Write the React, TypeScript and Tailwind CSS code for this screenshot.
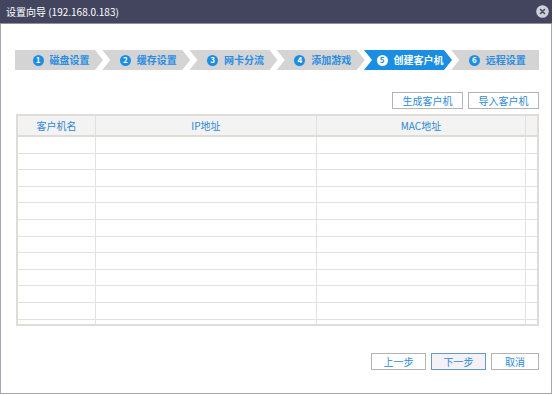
import React from "react";

const FONT = { fontFamily: '"Noto Sans CJK SC", "Noto Sans", sans-serif' };

const STEPS = ["磁盘设置", "缓存设置", "网卡分流", "添加游戏", "创建客户机", "远程设置"];
const ACTIVE = 4;

function Step({ index, label }: { index: number; label: string }) {
  const active = index === ACTIVE;
  const shape =
    index === 0
      ? "[clip-path:polygon(0_0,calc(100%_-_8px)_0,100%_50%,calc(100%_-_8px)_100%,0_100%)]"
      : index === STEPS.length - 1
        ? "[clip-path:polygon(0_0,100%_0,100%_100%,0_100%,8px_50%)]"
        : "[clip-path:polygon(0_0,calc(100%_-_8px)_0,100%_50%,calc(100%_-_8px)_100%,0_100%,8px_50%)]";
  return (
    <div
      className={[
        "flex h-[20px] w-[88px] shrink-0 items-center justify-center gap-[6px] pl-1",
        index > 0 ? "-ml-[0.75px]" : "",
        active ? "bg-[#1b8ee4]" : "bg-[#d4d4d4]",
        shape,
      ].join(" ")}
    >
      <span
        className={[
          "flex h-[11px] w-[11px] items-center justify-center rounded-full text-[8px] font-bold leading-none",
          active ? "bg-white text-[#1b8ee4]" : "bg-[#1b8ee4] text-white",
        ].join(" ")}
      >
        {index + 1}
      </span>
      <span
        className={[
          "text-[10px] font-bold leading-none",
          active ? "text-white" : "text-[#2a8de2]",
        ].join(" ")}
      >
        {label}
      </span>
    </div>
  );
}

function Btn({
  children,
  width,
  primary,
}: {
  children: React.ReactNode;
  width: string;
  primary?: boolean;
}) {
  return (
    <button
      className={[
        "flex h-[17px] items-center justify-center text-[10px] leading-none text-[#2d8ad6]",
        width,
        primary
          ? "border border-[#6b98c4] bg-[#f4f2f7]"
          : "border border-[#b4b4b4] bg-white",
      ].join(" ")}
    >
      {children}
    </button>
  );
}

const ROWS = Array.from({ length: 12 }, (_, i) => i);

export default function App() {
  return (
    <div className="h-[395px] w-[554px] overflow-hidden bg-white" style={FONT}>
      <div className="flex h-[394px] w-[552px] flex-col border-x border-b border-[#a6a6b6]">
        {/* title bar */}
        <div className="-mx-px flex h-[24px] shrink-0 items-center justify-between border-b border-[#8e8fa2] bg-[#43455f] pl-[6px] pr-[3px]">
          <span className="text-[10px] text-white">设置向导 (192.168.0.183)</span>
          <svg width="13" height="13" viewBox="0 0 13 13" className="-mt-px">
            <circle cx="6.5" cy="6.5" r="6.3" fill="#cfd0da" />
            <path d="M4.5 4.5 L8.5 8.5 M8.5 4.5 L4.5 8.5" stroke="#4a4b60" strokeWidth="1.6" strokeLinecap="round" />
          </svg>
        </div>

        <div className="flex flex-1 flex-col pl-[14px] pr-[12px]">
          {/* steps */}
          <div className="mt-[26px] flex">
            {STEPS.map((s, i) => (
              <Step key={s} index={i} label={s} />
            ))}
          </div>

          {/* top actions */}
          <div className="mt-[22px] flex justify-end gap-[5px]">
            <Btn width="w-[71px]">生成客户机</Btn>
            <Btn width="w-[71px]">导入客户机</Btn>
          </div>

          {/* table */}
          <div className="ml-px mt-[5px] h-[212px] overflow-hidden border-2 border-[#dfdbd7]">
            <div className="flex h-[21px] border-b-2 border-[#dfdbd7] bg-[#f3f3f3] text-[10px] text-[#2d88cf]">
              <div className="flex w-[78px] items-center justify-center border-r border-[#e2dfdc]">客户机名</div>
              <div className="flex w-[221px] items-center justify-center border-r border-[#e2dfdc]">IP地址</div>
              <div className="flex w-[209px] items-center justify-center border-r border-[#e2dfdc]">MAC地址</div>
              <div className="flex-1" />
            </div>
            {ROWS.map((r) => (
              <div key={r} className="flex h-[16.6px] border-b border-[#e4e1de]">
                <div className="w-[78px] border-r border-[#e4e1de]" />
                <div className="w-[221px] border-r border-[#e4e1de]" />
                <div className="w-[209px] border-r border-[#e4e1de]" />
                <div className="flex-1" />
              </div>
            ))}
          </div>

          {/* bottom actions */}
          <div className="mt-[27px] flex justify-end gap-[5px]">
            <Btn width="w-[55px]">上一步</Btn>
            <Btn width="w-[55px]" primary>
              下一步
            </Btn>
            <Btn width="w-[48px]">取消</Btn>
          </div>
        </div>
      </div>
    </div>
  );
}
